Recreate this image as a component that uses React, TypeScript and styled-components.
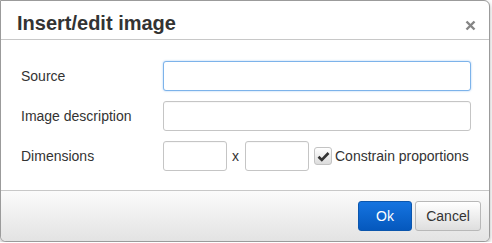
import React from "react";
import styled, { createGlobalStyle } from "styled-components";

const Global = createGlobalStyle`
  html, body { margin: 0; padding: 0; background: #ffffff; }
  body { font-family: "Liberation Sans", Arial, Helvetica, sans-serif; }
  * { box-sizing: border-box; }
`;

const Dialog = styled.div`
  width: 490px;
  height: 242px;
  border: 1px solid #9b9b9b;
  border-radius: 0 6px 6px 6px;
  background: #ffffff;
  box-shadow: 0 2px 4px rgba(0, 0, 0, 0.3);
  display: flex;
  flex-direction: column;
  overflow: hidden;
`;

const Head = styled.div`
  height: 39px;
  border-bottom: 1px solid #c8c8c8;
  display: flex;
  align-items: flex-start;
  justify-content: space-between;
  padding: 12px 13px 0 16px;
`;

const Title = styled.div`
  font-size: 20px;
  line-height: 20px;
  font-weight: bold;
  color: #333333;
`;

const Close = styled.button`
  border: none;
  background: transparent;
  padding: 0;
  margin-top: 6px;
  width: 12px;
  height: 12px;
  display: flex;
  align-items: center;
  justify-content: center;
  cursor: pointer;
`;

const Body = styled.div`
  flex: 1;
  padding: 21px 18px 19px 20px;
  display: flex;
  flex-direction: column;
  gap: 10px;
`;

const Row = styled.div`
  display: grid;
  grid-template-columns: 142px 1fr;
  align-items: center;
`;

const Label = styled.label`
  font-size: 14px;
  color: #333333;
  line-height: 16px;
`;

const Input = styled.input<{ $focused?: boolean }>`
  height: 30px;
  width: 100%;
  border: 1px solid ${(p) => (p.$focused ? "#7db3ea" : "#c5c5c5")};
  border-radius: 3px;
  background: #fff;
  box-shadow: ${(p) =>
    p.$focused ? "0 0 2px rgba(40, 130, 230, 0.45)" : "inset 0 1px 1px rgba(0,0,0,0.03)"};
  outline: none;
  font-family: inherit;
  font-size: 14px;
  padding: 0 6px;
`;

const SmallInput = styled(Input)`
  width: 64px;
`;

const DimGroup = styled.div`
  display: flex;
  align-items: center;
`;

const Times = styled.span`
  font-size: 14px;
  color: #333;
  margin: 0 6px 0 5px;
`;

const CheckWrap = styled.label`
  display: flex;
  align-items: center;
  margin-left: 5px;
  font-size: 14px;
  color: #333;
  gap: 3px;
`;

const CheckBox = styled.span`
  width: 18px;
  height: 18px;
  border: 1px solid #c3c3c3;
  border-radius: 3px;
  background: linear-gradient(#ffffff, #dcdcdc);
  display: flex;
  align-items: center;
  justify-content: center;
`;

const Foot = styled.div`
  height: 51px;
  border-top: 1px solid #c8c8c8;
  background: linear-gradient(#fbfbfb, #e3e3e3);
  display: flex;
  justify-content: flex-end;
  align-items: flex-start;
  padding: 10px 8px 0 0;
  gap: 3px;
`;

const Button = styled.button<{ $primary?: boolean }>`
  height: 30px;
  padding: 0 ${(p) => (p.$primary ? "17px" : "10px")};
  min-width: ${(p) => (p.$primary ? "53px" : "66px")};
  border-radius: 3px;
  border: 1px solid ${(p) => (p.$primary ? "#0b56ad" : "#b8b8b8")};
  background: ${(p) =>
    p.$primary ? "linear-gradient(#1574e0, #0558bd)" : "linear-gradient(#ffffff, #dedede)"};
  color: ${(p) => (p.$primary ? "#ffffff" : "#333333")};
  font-family: inherit;
  font-size: 14px;
  line-height: 16px;
  cursor: pointer;
`;

export default function App() {
  return (
    <>
      <Global />
      <Dialog>
        <Head>
          <Title>Insert/edit image</Title>
          <Close aria-label="Close">
            <svg width="11" height="11" viewBox="0 0 11 11">
              <path d="M1.5 1.5 L9.5 9.5 M9.5 1.5 L1.5 9.5" stroke="#858585" strokeWidth="2.4" strokeLinecap="butt" />
            </svg>
          </Close>
        </Head>
        <Body>
          <Row>
            <Label>Source</Label>
            <Input $focused />
          </Row>
          <Row>
            <Label>Image description</Label>
            <Input />
          </Row>
          <Row>
            <Label>Dimensions</Label>
            <DimGroup>
              <SmallInput />
              <Times>x</Times>
              <SmallInput />
              <CheckWrap>
                <CheckBox>
                  <svg width="13" height="11" viewBox="0 0 13 11">
                    <path d="M1.5 5.8 L4.8 9 L11.5 2" stroke="#333" strokeWidth="2.6" fill="none" strokeLinejoin="miter" />
                  </svg>
                </CheckBox>
                Constrain proportions
              </CheckWrap>
            </DimGroup>
          </Row>
        </Body>
        <Foot>
          <Button $primary>Ok</Button>
          <Button>Cancel</Button>
        </Foot>
      </Dialog>
    </>
  );
}
